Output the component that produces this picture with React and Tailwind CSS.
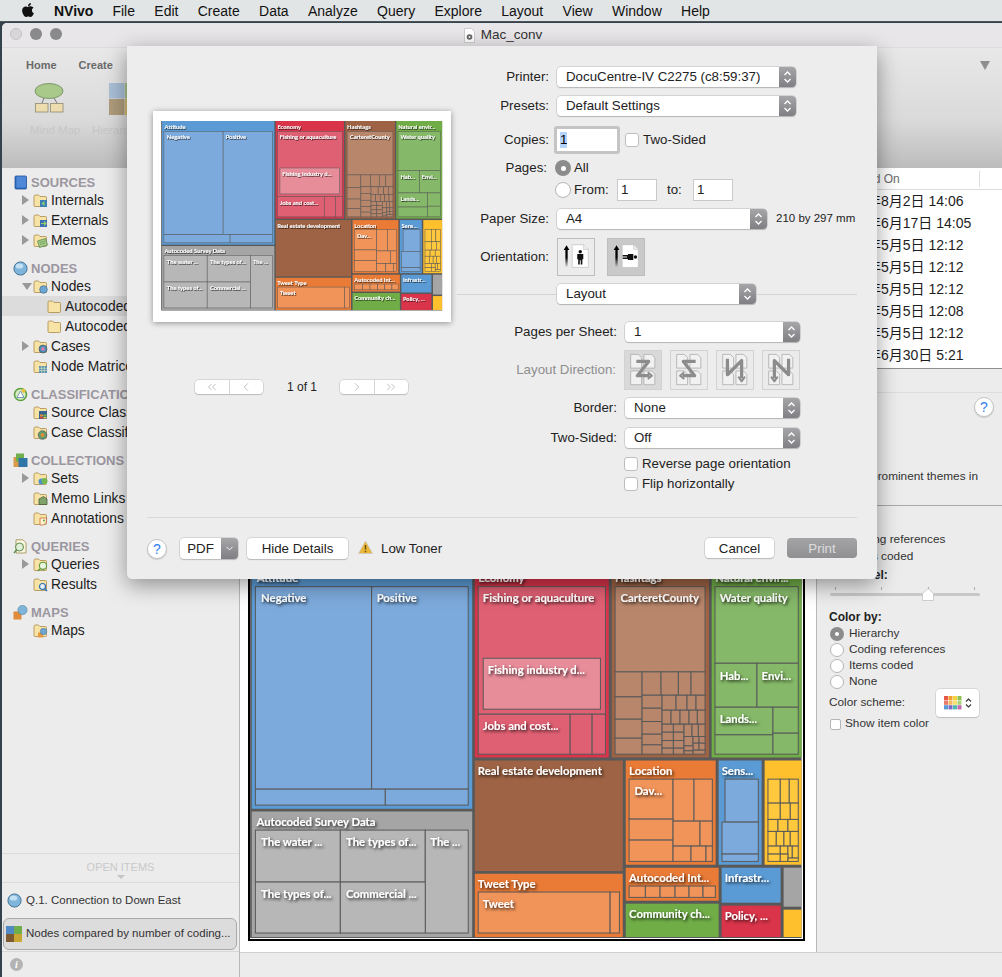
import React from 'react';
import { FaApple } from 'react-icons/fa';
import { ChevronLeft, ChevronRight, ChevronsLeft, ChevronsRight, ChevronDown } from 'lucide-react';

const BLUE = '#5b9bd5', BLUE2 = '#7caadc', RED = '#d9344a', RED2 = '#e06073', RED3 = '#e78c99';
const BROWN = '#9e6344', BROWN2 = '#b8866b', GREEN = '#70ad47', GREEN2 = '#85b868';
const GRAY = '#a5a5a5', GRAY2 = '#b7b7b7', ORANGE = '#ea7b36', ORANGE2 = '#f0945a', YELLOW = '#ffc02e', YELLOW2 = '#ffc83d';

// treemap rects, x1 y1 x2 y2 in 3x page units
const groups = [
  [-655, -12, 7, 717, BLUE], [-655, 725, 7, 1102, GRAY], [15, -12, 417, 563, RED], [426, -12, 718, 563, BROWN],
  [726, -12, 996, 563, GREEN], [15, 572, 459, 904, BROWN], [468, 572, 738, 885, ORANGE], [747, 572, 876, 885, BLUE],
  [885, 572, 996, 885, YELLOW], [15, 912, 459, 1102, ORANGE], [468, 894, 747, 993, ORANGE], [468, 1002, 747, 1102, GREEN],
  [756, 894, 933, 999, BLUE], [756, 1008, 933, 1102, RED], [942, 894, 996, 1011, GRAY], [942, 1020, 996, 1102, YELLOW],
];

const cells = (fill, list) => list.map((r) => [...r, fill]);

const leaves = [
  ...cells(BLUE2, [[-644, 50, -295, 658], [-295, 50, -5, 658], [-644, 658, -254, 706], [-254, 658, -5, 706]]),
  ...cells(GRAY2, [[-644, 781, -389, 937], [-389, 781, -134, 937], [-134, 781, -5, 1090], [-644, 937, -389, 1090], [-389, 937, -134, 1090]]),
  ...cells(RED2, [[25, 50, 407, 433], [25, 433, 301, 553], [301, 433, 367, 553], [367, 433, 407, 553]]),
  ...cells(RED3, [[40, 265, 392, 418]]),
  ...cells(BROWN2, [
    [436, 50, 706, 306], [436, 306, 517, 381], [436, 381, 517, 448], [436, 448, 517, 505], [436, 505, 517, 553],
    [517, 306, 574, 376], [574, 306, 626, 376], [626, 306, 664, 376], [664, 306, 706, 376],
    [517, 376, 577, 415], [517, 415, 577, 455], [517, 455, 577, 493], [517, 493, 577, 525], [517, 525, 577, 553],
    [577, 376, 619, 421], [619, 376, 652, 421], [652, 376, 679, 421], [679, 376, 706, 421],
    [577, 421, 604, 463], [604, 421, 631, 463], [631, 421, 658, 463], [658, 421, 683, 463], [683, 421, 706, 463],
    [577, 463, 611, 487], [611, 463, 643, 487], [577, 487, 611, 512], [611, 487, 643, 512],
    [577, 512, 611, 535], [611, 512, 643, 535], [577, 535, 611, 553], [611, 535, 643, 553],
    [643, 463, 667, 500], [667, 463, 686, 500], [686, 463, 706, 500], [643, 500, 670, 528], [670, 500, 688, 520], [688, 500, 706, 520],
    [670, 520, 688, 541], [688, 520, 706, 541], [643, 528, 670, 543], [643, 543, 670, 553], [670, 541, 706, 553],
  ]),
  ...cells(GREEN2, [
    [736, 50, 986, 280], [736, 280, 862, 412], [862, 280, 986, 412], [736, 412, 910, 495], [910, 412, 986, 490],
    [736, 495, 910, 553], [910, 490, 986, 553],
  ]),
  ...cells(ORANGE2, [
    [478, 628, 610, 748], [610, 628, 673, 754], [673, 628, 728, 754], [478, 748, 610, 811], [478, 811, 610, 875],
    [610, 754, 691, 829], [691, 754, 728, 829], [610, 829, 664, 875], [664, 829, 709, 875], [709, 829, 728, 875],
    [25, 967, 421, 1090], [421, 967, 449, 1090],
    [478, 949, 527, 983], [527, 949, 571, 983], [571, 949, 616, 983], [616, 949, 658, 983], [658, 949, 700, 983], [700, 949, 737, 983],
  ]),
  ...cells(BLUE2, [[766, 628, 866, 757], [757, 757, 866, 853], [757, 853, 866, 875]]),
  ...cells(YELLOW2, [
    [895, 628, 932, 700], [932, 628, 959, 700], [959, 628, 986, 700], [895, 700, 932, 749], [932, 700, 962, 749], [962, 700, 986, 749],
    [895, 749, 925, 785], [925, 749, 955, 785], [955, 749, 986, 785], [895, 785, 920, 829], [920, 785, 943, 829], [943, 785, 962, 829], [962, 785, 986, 829],
    [895, 829, 932, 853], [932, 829, 955, 853], [955, 829, 968, 865], [968, 829, 986, 865], [895, 853, 932, 875], [932, 853, 955, 875], [955, 865, 986, 875],
  ]),
];

const labels = [
  [-640, 25, 'Attitude'], [25, 25, 'Economy'], [436, 25, 'Hashtags'], [737, 25, 'Natural envir...'],
  [-627, 85, 'Negative'], [-280, 85, 'Positive'], [39, 85, 'Fishing or aquaculture'], [452, 85, 'CarteretCounty'], [750, 85, 'Water quality'],
  [54, 301, 'Fishing industry d...'], [39, 469, 'Jobs and cost...'], [750, 317, 'Hab...'], [876, 317, 'Envi...'], [750, 448, 'Lands...'],
  [-641, 757, 'Autocoded Survey Data'], [-627, 817, 'The water ...'], [-372, 817, 'The types of...'], [-119, 817, 'The ...'],
  [-627, 973, 'The types of...'], [-372, 973, 'Commercial ...'],
  [24, 604, 'Real estate development'], [478, 604, 'Location'], [494, 665, 'Dav...'], [756, 604, 'Sens...'],
  [24, 943, 'Tweet Type'], [39, 1003, 'Tweet'], [478, 925, 'Autocoded Int...'], [765, 925, 'Infrastr...'],
  [478, 1033, 'Community ch...'], [765, 1040, 'Policy, ...'],
];

const Treemap = ({ id }) => (
  <svg viewBox="-660 -12 1660 1120" className="block h-full w-full">
    <defs>
      <filter id={id} x="-20%" y="-60%" width="140%" height="240%">
        <feDropShadow dx="4" dy="5" stdDeviation="4" floodColor="#000" floodOpacity="0.85" />
      </filter>
    </defs>
    <rect x="-660" y="-12" width="1660" height="1120" fill="#fff" />
    <rect x="-660" y="-12" width="1656" height="1117" fill="#595959" />
    {groups.map(([x1, y1, x2, y2, fill], i) => (
      <rect key={i} x={x1} y={y1} width={x2 - x1} height={y2 - y1} fill={fill} />
    ))}
    {leaves.map(([x1, y1, x2, y2, fill], i) => (
      <rect key={i} x={x1} y={y1} width={x2 - x1} height={y2 - y1} fill={fill} stroke="#595959" strokeWidth="3" />
    ))}
    <g filter={`url(#${id})`} fill="#fff" fontFamily="Lato, sans-serif" fontWeight="700" fontSize="34">
      {labels.map(([x, y, text], i) => (
        <text key={i} x={x} y={y + 12}>{text}</text>
      ))}
    </g>
  </svg>
);

const Folder = ({ children }) => (
  <svg viewBox="0 0 15 15" className="h-[15px] w-[15px] shrink-0">
    <path d="M1 3.5 Q1 2 2.5 2 H5.5 L7 3.5 H12.5 Q13.5 3.5 13.5 4.5 V12.5 Q13.5 13.5 12.5 13.5 H2 Q1 13.5 1 12.5 Z" fill="#f7e3a6" stroke="#a98a4c" strokeWidth="0.8" />
    {children}
  </svg>
);

const badges = {
  internals: <><rect x="7" y="7" width="7" height="7" fill="#3d7fb5" /><path d="M8.5 10.5 L11.5 8 V13 Z" fill="#8fd06e" /></>,
  externals: <><rect x="7" y="7" width="7" height="7" fill="#3d6fb5" /><path d="M8 10.5 H13 M11 8.5 L13 10.5 L11 12.5" stroke="#8fd06e" strokeWidth="1.2" fill="none" /></>,
  memos: <><path d="M4.5 8 L12.5 5.5 L14.5 12 L6.5 14.5 Z" fill="#a9d08e" stroke="#4c7a3a" strokeWidth="0.7" /><path d="M6.5 9.5 L12 8 M7 11.5 L12.5 10" stroke="#4c7a3a" strokeWidth="0.6" /></>,
  nodes: <circle cx="10.5" cy="10.5" r="3.8" fill="#6ea6d3" stroke="#3d6b8e" strokeWidth="0.7" />,
  cases: <><circle cx="10" cy="10" r="4" fill="#4a8fb8" stroke="#555" strokeWidth="0.7" /><circle cx="10" cy="10" r="1.8" fill="#e27ab0" /></>,
  matrix: <><rect x="6" y="7" width="8" height="7" fill="#5a8fb0" /><path d="M8.6 7 V14 M11.3 7 V14 M6 9.3 H14 M6 11.6 H14" stroke="#dcecc2" strokeWidth="0.6" /></>,
  source: <><rect x="6" y="6" width="8" height="8" fill="#36648f" /><rect x="7" y="9.5" width="3" height="2" fill="#e48a3a" /><rect x="10.5" y="9.5" width="3" height="2" fill="#7ab648" /><rect x="7" y="12" width="3" height="1.6" fill="#d6453a" /><rect x="10.5" y="12" width="3" height="1.6" fill="#e8c33a" /></>,
  caseClass: <><circle cx="9.5" cy="10" r="4.3" fill="#5f9e6e" stroke="#555" strokeWidth="0.7" /><circle cx="9.5" cy="10" r="2" fill="#e08a3a" /></>,
  sets: <><circle cx="8.5" cy="10.5" r="3" fill="#4d8fd0" /><circle cx="11.5" cy="10" r="3" fill="#72b84e" /></>,
  memoLinks: <path d="M6 8 L10.5 5.5 L14 8 V13.5 H6 Z" fill="#7fa36a" stroke="#4a5a3a" strokeWidth="0.8" />,
  annotations: <><path d="M7 7 H13.5 V11 L10.5 14 H7 Z" fill="#fff3d0" stroke="#c8683a" strokeWidth="0.8" /><circle cx="11" cy="9.5" r="1" fill="#5aa04a" /></>,
  queries: <><circle cx="10" cy="8.8" r="3.6" fill="#eaf5e0" stroke="#5e9a3e" strokeWidth="1.1" /><path d="M7.4 11.5 L4.8 14" stroke="#5e9a3e" strokeWidth="1.4" /></>,
  results: <><circle cx="9.5" cy="9.5" r="3" fill="#e8f2fa" stroke="#2f6fb0" strokeWidth="1.2" /><path d="M11.8 11.8 L14 14" stroke="#2f6fb0" strokeWidth="1.4" /></>,
  maps: <><rect x="5" y="9.5" width="5" height="5" fill="#e89a3c" /><circle cx="10.5" cy="8.5" r="3.2" fill="#6ea6d3" stroke="#3d6b8e" strokeWidth="0.5" /></>,
};

const headIcons = {
  sources: (
    <svg viewBox="0 0 14 15" className="h-[15px] w-[14px]">
      <rect x="1" y="1" width="11.5" height="13" rx="1" fill="#2f6cc0" stroke="#1f4f96" strokeWidth="0.8" />
      <rect x="2.5" y="1.5" width="9.5" height="11" fill="#4f88d6" />
    </svg>
  ),
  nodes: (
    <svg viewBox="0 0 15 15" className="h-[15px] w-[15px]">
      <circle cx="7.5" cy="7.5" r="6.6" fill="#7fb5da" stroke="#3d6b8e" strokeWidth="0.9" />
      <ellipse cx="6.5" cy="5" rx="3.8" ry="2.6" fill="#c2e0f2" />
    </svg>
  ),
  classifications: (
    <svg viewBox="0 0 15 15" className="h-[15px] w-[15px]">
      <circle cx="7.5" cy="7.5" r="6" fill="#d8ecc4" stroke="#5da040" strokeWidth="1.6" />
      <path d="M7.5 4 L11 10.5 H4 Z" fill="#fff" stroke="#6a8fb8" strokeWidth="0.9" />
      <circle cx="10.5" cy="3.8" r="2" fill="#e9c23c" />
    </svg>
  ),
  collections: (
    <svg viewBox="0 0 15 15" className="h-[15px] w-[15px]">
      <rect x="0.5" y="4" width="7" height="10" fill="#d99a4a" />
      <rect x="3" y="0.5" width="8" height="8" fill="#6fae4a" />
      <rect x="5.5" y="5" width="9" height="9" fill="#2f75a8" />
    </svg>
  ),
  queries: (
    <svg viewBox="0 0 15 15" className="h-[15px] w-[15px]">
      <path d="M3 0.8 H10 L13 3.8 V14 H3 Z" fill="#fbf6df" stroke="#9a8a50" strokeWidth="0.8" />
      <circle cx="6.5" cy="8" r="4" fill="#e0efd8" stroke="#5e8a4e" strokeWidth="1" />
      <path d="M3.6 11 L1 14" stroke="#5e8a4e" strokeWidth="1.4" />
    </svg>
  ),
  maps: (
    <svg viewBox="0 0 15 15" className="h-[15px] w-[15px]">
      <rect x="0.5" y="6.5" width="8" height="8" fill="#e08a3a" />
      <circle cx="9.5" cy="5" r="4.6" fill="#7fb5da" stroke="#4f7f9e" strokeWidth="0.6" />
    </svg>
  ),
};

const tree = [
  { title: 'SOURCES', icon: 'sources', items: [['Internals', 'internals', 1], ['Externals', 'externals', 1], ['Memos', 'memos', 1]] },
  {
    title: 'NODES', icon: 'nodes',
    items: [['Nodes', 'nodes', 2], ['Autocoded Survey Data', null, 0, true, true], ['Autocoded Interviews', null, 0, true], ['Cases', 'cases', 1], ['Node Matrices', 'matrix', 0]],
  },
  { title: 'CLASSIFICATIONS', icon: 'classifications', items: [['Source Classifications', 'source', 0], ['Case Classifications', 'caseClass', 0]] },
  { title: 'COLLECTIONS', icon: 'collections', items: [['Sets', 'sets', 1], ['Memo Links', 'memoLinks', 0], ['Annotations', 'annotations', 0]] },
  { title: 'QUERIES', icon: 'queries', items: [['Queries', 'queries', 1], ['Results', 'results', 0]] },
  { title: 'MAPS', icon: 'maps', items: [['Maps', 'maps', 0]] },
];

const Sidebar = () => (
  <aside className="flex w-[238px] shrink-0 flex-col border-r border-[#b9b9b9] bg-[#ececec]">
    <div className="pt-[6px]">
      {tree.map((group) => (
        <div key={group.title} className="mb-[10px]">
          <div className="flex h-4 items-center">
            <span className="flex w-[29px] justify-end pr-[3px]">{headIcons[group.icon]}</span>
            <span className="pt-[2px] text-[13px] font-bold whitespace-nowrap text-[#9b96a0]">{group.title}</span>
          </div>
          {group.items.map(([name, badge, arrow, nested, selected]) => (
            <div key={name} className={`flex h-5 items-center pl-[20px] ${selected ? 'bg-[#dcdcdc]' : ''}`}>
              <span className="flex w-[11px] shrink-0">
                {arrow === 1 && <span className="h-0 w-0 border-y-[5px] border-l-[7px] border-y-transparent border-l-[#999]" />}
                {arrow === 2 && <span className="h-0 w-0 border-x-[5px] border-t-[7px] border-x-transparent border-t-[#999]" />}
              </span>
              <span className={nested ? 'ml-[14px]' : ''}><Folder>{badges[badge]}</Folder></span>
              <span className="ml-[3px] pt-[2px] text-[13.8px] whitespace-nowrap text-[#1d1d1d]">{name}</span>
            </div>
          ))}
        </div>
      ))}
    </div>
    <div className="mt-auto">
      <div className="flex h-[30px] flex-col items-center justify-center border-y border-[#dcdcdc] pt-[4px]">
        <span className="text-[11px] leading-3 text-[#c9c9c9]">OPEN ITEMS</span>
        <span className="mt-[2px] h-0 w-0 border-x-[4px] border-t-[4px] border-x-transparent border-t-[#c4c4c4]" />
      </div>
      <div className="flex h-[35px] items-center pl-[5px] text-[11.5px] text-[#333]">
        {headIcons.nodes}
        <span className="ml-[4px]">Q.1. Connection to Down East</span>
      </div>
      <div className="mr-[2px] ml-px flex h-[32px] items-center rounded-[6px] border border-[#a9a9a9] bg-[#dcdcdc] pl-[2px] text-[11.5px] text-[#333]">
        <svg viewBox="0 0 16 16" className="h-4 w-4 shrink-0">
          <rect width="8" height="8" fill="#4f89c6" /><rect x="8" width="8" height="8" fill="#6fae4a" />
          <rect y="8" width="8" height="8" fill="#7d5a30" /><rect x="8" y="8" width="8" height="8" fill="#c9a531" />
        </svg>
        <span className="ml-[4px] whitespace-nowrap">Nodes compared by number of coding...</span>
      </div>
      <div className="mt-[1px] flex h-[26px] items-center border-t border-[#d8d8d8] pl-[8px]">
        <span className="flex h-[13px] w-[13px] items-center justify-center rounded-full bg-[#b3b3b3] font-['Liberation_Serif',serif] text-[10px] font-bold text-white italic">i</span>
      </div>
    </div>
  </aside>
);

const Chevrons = () => (
  <svg viewBox="0 0 9 14" className="h-[14px] w-[9px]" fill="none" stroke="#fff" strokeWidth="1.3">
    <path d="M1.5 5 L4.5 2 L7.5 5 M1.5 9 L4.5 12 L7.5 9" />
  </svg>
);

const Select = ({ value, className }) => (
  <div className={`flex h-5 items-center justify-between rounded-[4px] bg-white shadow-[0_0_0_0.5px_#b9b9b9,0_1px_1px_#b4b4b4] ${className}`}>
    <span className="pl-[9px] whitespace-nowrap text-[#222]">{value}</span>
    <span className="flex h-full w-[17px] items-center justify-center rounded-r-[4px] bg-gradient-to-b from-[#a6a6a9] to-[#808084]"><Chevrons /></span>
  </div>
);

const Check = () => <span className="block h-[14px] w-[14px] shrink-0 rounded-[3px] border border-[#bdbdbd] bg-white" />;

const Radio = ({ on }) => (
  on
    ? <span className="flex h-4 w-4 shrink-0 items-center justify-center rounded-full bg-[#8c8c8c]"><span className="h-[5px] w-[5px] rounded-full bg-white" /></span>
    : <span className="h-4 w-4 shrink-0 rounded-full border border-[#b5b5b5] bg-white" />
);

const Label = ({ children, className }) => (
  <span className={`shrink-0 pr-2 text-right whitespace-nowrap text-[#222] ${className}`}>{children}</span>
);

const Field = ({ value, className }) => (
  <span className={`flex h-[22px] items-center border border-[#c9c9c9] bg-white pl-[3px] text-[#222] ${className}`}>{value}</span>
);

const Orient = ({ landscape, active }) => (
  <div className={`h-[38px] w-[38px] border border-[#bdbdbd] ${active ? 'bg-[#c9c9c9]' : 'bg-[#ececec]'}`}>
    <svg viewBox="0 0 38 38" className="h-full w-full">
      <defs>
        <linearGradient id={active ? 'fadeA' : 'fadeB'} x1="0" y1="0" x2="0" y2="1">
          <stop offset="0" stopColor="#000" /><stop offset="0.45" stopColor="#000" /><stop offset="1" stopColor="#000" stopOpacity="0" />
        </linearGradient>
      </defs>
      <rect x="7.8" y="11" width="2.4" height="19" fill={`url(#${active ? 'fadeA' : 'fadeB'})`} />
      <path d="M6 11.5 L9 6.5 L12 11.5 Z" fill="#000" />
      <path d="M15 6 H27 L32 11 V30 H15 Z" fill="#fff" stroke="#bdbdbd" strokeWidth="0.7" />
      <path d="M27 6 V11 H32" fill="#eee" stroke="#bdbdbd" strokeWidth="0.6" />
      <g fill="#111" transform={landscape ? 'rotate(90 23.5 19)' : undefined}>
        <circle cx="23.5" cy="13.5" r="1.8" />
        <path d="M20.3 15.8 H26.7 V21.5 H25.7 V27 H24 V22.5 H23 V27 H21.3 V21.5 H20.3 Z" />
      </g>
    </svg>
  </div>
);

const dirPaths = [
  ['M12 11 H25 L13 26 H26', 'M24 22.5 L28.5 26 L24 29.5'],
  ['M26 11 H13 L25 26 H12', 'M14 22.5 L9.5 26 L14 29.5'],
  ['M11 8 V25 L26 10 V29', 'M22.5 27 L26 32 L29.5 27'],
  ['M27 8 V25 L12 10 V29', 'M8.5 27 L12 32 L15.5 27'],
];

const DirButton = ({ index }) => (
  <div className={`h-10 w-[38px] border border-[#d2d2d2] ${index === 0 ? 'bg-[#d9d9d9]' : 'bg-[#ebebeb]'}`}>
    <svg viewBox="0 0 38 40" className="h-full w-full" fill="none">
      <g stroke="#a8a8a8" strokeWidth="0.8" fill="#f1f1f1">
        <path d="M6 3.5 H14 L17.5 7 V18 H6 Z" /><path d="M20 3.5 H28 L31.5 7 V18 H20 Z" />
        <path d="M6 21 H14 L17.5 24.5 V35.5 H6 Z" /><path d="M20 21 H28 L31.5 24.5 V35.5 H20 Z" />
      </g>
      <g stroke="#8c8c8c" strokeWidth="3.4" strokeLinejoin="round">
        <path d={dirPaths[index][0]} /><path d={dirPaths[index][1]} strokeWidth="2" />
      </g>
    </svg>
  </div>
);

const HelpButton = ({ className }) => (
  <span className={`flex h-5 w-5 items-center justify-center rounded-full border border-[#c4c4c4] bg-white text-sm text-[#2f80ed] shadow-[0_1px_1px_#c9c9c9] ${className}`}>?</span>
);

const PageButtons = ({ left }) => {
  const A = left ? ChevronsLeft : ChevronRight;
  const B = left ? ChevronLeft : ChevronsRight;
  return (
    <div className="flex h-[14px] w-[68px] rounded-[4px] bg-white shadow-[0_0_0_0.5px_#c0c0c0,0_1px_1px_#bdbdbd]">
      <span className="flex flex-1 items-center justify-center border-r border-[#d5d5d5]"><A size={14} strokeWidth={1.2} color="#a8a8a8" /></span>
      <span className="flex flex-1 items-center justify-center"><B size={14} strokeWidth={1.2} color="#a8a8a8" /></span>
    </div>
  );
};

const Button = ({ children, className }) => (
  <span className={`flex h-5 items-center justify-center rounded-[4px] bg-white text-[#222] shadow-[0_0_0_0.5px_#bdbdbd,0_1px_1px_#b8b8b8] ${className}`}>{children}</span>
);

const PrintSheet = () => (
  <div className="absolute top-[46px] left-[127px] z-10 flex h-[533px] w-[750px] flex-col rounded-b-[5px] bg-[#ededed] text-[13.3px] shadow-[0_6px_22px_rgba(0,0,0,0.4)]">
    <div className="flex h-[471px]">
      <div className="w-[330px] shrink-0 pt-[65px] pl-[26px]">
        <div className="h-[211px] w-[298px] bg-white px-[8px] pt-[10px] shadow-[0_1px_6px_rgba(0,0,0,0.4)]">
          <div className="h-[190px] w-[282px] blur-[0.5px]"><Treemap id="previewShadow" /></div>
        </div>
        <div className="mt-[57px] ml-[42px] flex items-center">
          <PageButtons left />
          <span className="w-[77px] pl-px text-center text-xs text-[#222]">1 of 1</span>
          <PageButtons />
        </div>
      </div>
      <div className="w-[400px] pt-[21px]">
        <div className="flex items-center"><Label className="w-[100px]">Printer:</Label><Select className="w-[239px]" value="DocuCentre-IV C2275 (c8:59:37)" /></div>
        <div className="mt-[9px] flex items-center"><Label className="w-[100px]">Presets:</Label><Select className="w-[239px]" value="Default Settings" /></div>
        <div className="mt-[10px] flex h-[28px] items-center">
          <Label className="w-[100px]">Copies:</Label>
          <span className="-ml-[3px] flex h-[28px] w-[66px] items-center rounded-[3px] bg-[#c4c4c6] p-[3px]">
            <span className="flex h-full w-full items-center bg-white pl-[3px]"><span className="bg-[#b3d4fc] leading-4">1</span></span>
          </span>
          <span className="ml-[5px]"><Check /></span>
          <span className="ml-[4px] text-[#222]">Two-Sided</span>
        </div>
        <div className="mt-[6px] flex h-4 items-center"><Label className="w-[98px]">Pages:</Label><Radio on /><span className="ml-[3px] text-[#222]">All</span></div>
        <div className="mt-[3px] flex h-[22px] items-center pl-[98px]">
          <Radio />
          <span className="ml-[3px] w-[43px] text-[#222]">From:</span>
          <Field className="w-10" value="1" />
          <span className="w-9 pl-[10px] text-[#222]">to:</span>
          <Field className="w-10" value="1" />
        </div>
        <div className="mt-[8px] flex items-center">
          <Label className="w-[100px]">Paper Size:</Label>
          <Select className="w-[210px]" value="A4" />
          <span className="ml-[9px] text-[11.5px] whitespace-nowrap text-[#222]">210 by 297 mm</span>
        </div>
        <div className="mt-[9px] flex items-center">
          <Label className="w-[100px]">Orientation:</Label>
          <Orient />
          <span className="ml-[12px]"><Orient landscape active /></span>
        </div>
        <div className="mt-[8px] flex items-center">
          <span className="h-px w-[100px] bg-[#d4d4d4]" />
          <Select className="w-[199px]" value="Layout" />
          <span className="h-px flex-1 bg-[#d4d4d4]" />
        </div>
        <div className="mt-[18px] flex items-center"><Label className="w-[168px]">Pages per Sheet:</Label><Select className="w-[175px]" value="1" /></div>
        <div className="mt-[8px] flex items-center">
          <Label className="w-[167px] !text-[#8e8e8e]">Layout Direction:</Label>
          <DirButton index={0} />
          <span className="ml-[8px]"><DirButton index={1} /></span>
          <span className="ml-[8px]"><DirButton index={2} /></span>
          <span className="ml-[8px]"><DirButton index={3} /></span>
        </div>
        <div className="mt-[8px] flex items-center"><Label className="w-[168px]">Border:</Label><Select className="w-[175px]" value="None" /></div>
        <div className="mt-[10px] flex items-center"><Label className="w-[168px]">Two-Sided:</Label><Select className="w-[175px]" value="Off" /></div>
        <div className="mt-[9px] flex h-[14px] items-center pl-[167px]"><Check /><span className="ml-[4px] text-[#222]">Reverse page orientation</span></div>
        <div className="mt-[6px] flex h-[14px] items-center pl-[167px]"><Check /><span className="ml-[4px] text-[#222]">Flip horizontally</span></div>
      </div>
    </div>
    <div className="mx-[20px] flex flex-1 items-start border-t border-[#d9d9d9] pt-[20px]">
      <HelpButton className="mt-px" />
      <div className="ml-[13px] flex h-[21px] w-[58px] rounded-[4px] bg-white shadow-[0_0_0_0.5px_#bdbdbd,0_1px_1px_#b8b8b8]">
        <span className="flex w-[41px] items-center justify-center text-[#222]">PDF</span>
        <span className="flex flex-1 items-center justify-center rounded-r-[4px] bg-gradient-to-b from-[#a6a6a9] to-[#808084]"><ChevronDown size={11} color="#fff" strokeWidth={2} /></span>
      </div>
      <Button className="ml-[9px] !h-[21px] w-[101px]">Hide Details</Button>
      <svg viewBox="0 0 15 14" className="mt-[2px] ml-[10px] h-[14px] w-[15px]">
        <path d="M7.5 1 L14.5 13.5 H0.5 Z" fill="#e9b73a" stroke="#c9c9c9" strokeWidth="0.7" />
        <path d="M7.5 5 V9.5 M7.5 10.8 V12.2" stroke="#6a4a10" strokeWidth="1.4" />
      </svg>
      <span className="ml-[8px] leading-[21px] text-[#222]">Low Toner</span>
      <Button className="ml-auto w-[69px] pt-px">Cancel</Button>
      <span className="ml-[13px] flex h-5 w-[70px] items-center justify-center rounded-[4px] bg-gradient-to-b from-[#a4a4a6] to-[#909093] pt-px text-[#dcdcdc]">Print</span>
    </div>
  </div>
);

const dates = ['年8月2日 14:06', '年6月17日 14:05', '年5月5日 12:12', '年5月5日 12:12', '年5月5日 12:12', '年5月5日 12:08', '年5月5日 12:12', '年6月30日 5:21'];

const Table = () => (
  <div className="h-[201px] shrink-0 border-b border-[#8f8f8f] bg-white">
    <div className="flex h-[22px] items-center border-b border-[#dcdcdc] pl-[595px] text-xs text-[#6b6b6b]">
      <span className="w-[144px]">Modified On</span>
      <span className="h-[16px] w-px bg-[#dcdcdc]" />
    </div>
    {dates.map((date, i) => (
      <div key={i} className="flex h-[22px] items-center pl-[627px] text-sm whitespace-nowrap text-[#1d1d1d]">{date}</div>
    ))}
  </div>
);

const SmallRadio = ({ on }) => (
  on
    ? <span className="flex h-[14px] w-[14px] items-center justify-center rounded-full bg-[#8c8c8c]"><span className="h-1 w-1 rounded-full bg-white" /></span>
    : <span className="h-[14px] w-[14px] rounded-full border border-[#b5b5b5] bg-white" />
);

const RadioRow = ({ on, children, className }) => (
  <div className={`ml-px flex h-4 items-center ${className}`}>
    <SmallRadio on={on} /><span className="ml-[5px] text-[11.8px] text-[#333]">{children}</span>
  </div>
);

const OptionsPanel = () => (
  <div className="flex w-[186px] shrink-0 flex-col border-l border-[#b9b9b9] bg-[#ececec]">
    <div className="h-6 border-b border-[#dcdcdc]" />
    <div className="relative h-[113px] border-b border-[#a9a9a9] pt-[75px] pr-[24px] text-right text-[11.8px] whitespace-nowrap text-[#333]">
      <HelpButton className="absolute top-[4px] right-[8px]" />
      prominent themes in
    </div>
    <div className="pt-[8px] pl-[12px]">
      <div className="h-4 text-xs leading-4 font-bold text-[#222]">Size by:</div>
      <RadioRow className="mt-[2px]">Coding references</RadioRow>
      <RadioRow className="mt-px">Items coded</RadioRow>
      <div className="mt-[2px] h-4 text-xs leading-4 font-bold text-[#222]">Tree level:</div>
      <div className="mt-[4px] ml-px h-[18px] w-[150px]">
        <div className="flex justify-between px-[5px]">
          {[0, 1, 2, 3].map((t) => <span key={t} className="h-[3px] w-px bg-[#aaa]" />)}
        </div>
        <div className="relative mt-[3px] h-[3px] rounded-full bg-[#c8c8c8]">
          <svg viewBox="0 0 12 13" className="absolute -top-[5px] left-[92px] h-[13px] w-[12px]">
            <path d="M6 0.5 L11.5 5.5 V12.5 H0.5 V5.5 Z" fill="#fff" stroke="#bdbdbd" strokeWidth="0.7" />
          </svg>
        </div>
      </div>
      <div className="mt-[4px] h-4 text-xs leading-4 font-bold text-[#222]">Color by:</div>
      <RadioRow on className="mt-px">Hierarchy</RadioRow>
      <RadioRow>Coding references</RadioRow>
      <RadioRow>Items coded</RadioRow>
      <RadioRow>None</RadioRow>
      <div className="-mt-px flex h-[28px] items-center text-[11.8px] text-[#333]">
        Color scheme:
        <span className="mr-[23px] ml-auto flex h-[28px] w-[43px] items-center justify-center gap-[3px] rounded-[4px] bg-white shadow-[0_0_0_0.5px_#c4c4c4,0_1px_1px_#bdbdbd]">
          <svg viewBox="0 0 18 14" className="h-[14px] w-[18px]">
            {[['#e8574a', '#f0a030', '#f6d33c', '#8cc152'], ['#e97a6c', '#f5b860', '#f8e070', '#a8d478'], ['#5b9bd5', '#7e6bc4', '#4fb8b0', '#c46bb0']].map((row, y) =>
              row.map((c, x) => <rect key={`${x}${y}`} x={x * 4.5} y={y * 4.6} width="4" height="4.2" fill={c} />)
            )}
          </svg>
          <svg viewBox="0 0 7 12" className="h-3 w-[7px]" fill="none" stroke="#333" strokeWidth="1.1"><path d="M1 4.5 L3.5 2 L6 4.5 M1 7.5 L3.5 10 L6 7.5" /></svg>
        </span>
      </div>
      <div className="flex h-[14px] items-center text-[11.8px] text-[#333]">
        <span className="ml-px h-[11px] w-[11px] rounded-[2px] border border-[#b5b5b5] bg-white" />
        <span className="ml-[4px]">Show item color</span>
      </div>
    </div>
  </div>
);

const menus = ['File', 'Edit', 'Create', 'Data', 'Analyze', 'Query', 'Explore', 'Layout', 'View', 'Window', 'Help'];

export default function App() {
  return (
    <div className="relative h-[977px] w-[1002px] overflow-hidden bg-[#33424c] font-['Liberation_Sans','Noto_Sans_CJK_JP',sans-serif]">
      <div className="flex h-[22px] items-center border-b border-[#4c5459] bg-[#e2e5e6] pl-[20px] text-sm text-[#111]">
        <FaApple size={16} className="mb-[2px]" />
        <span className="ml-[18px] font-bold">NVivo</span>
        <div className="ml-[19px] flex gap-[19.3px]">
          {menus.map((m) => <span key={m}>{m}</span>)}
        </div>
      </div>
      <div className="mt-px ml-[2px] flex h-[954px] flex-col overflow-hidden rounded-tl-[5px] bg-[#ececec]">
        <div className="relative flex h-[25px] shrink-0 items-center justify-center border-b border-[#dcdcdc] bg-[#e8e6e8] pl-[2px] text-[13.5px] text-[#333]">
          <span className="absolute top-[5px] left-[8px] flex gap-[8px]">
            <span className="h-3 w-3 rounded-full border border-[#c4c4c4] bg-[#d8d6d8]" />
            <span className="h-3 w-3 rounded-full bg-[#8a898b]" />
            <span className="h-3 w-3 rounded-full bg-[#8a898b]" />
          </span>
          <svg viewBox="0 0 11 15" className="mr-[6px] h-[15px] w-[11px]">
            <path d="M0.5 0.5 H7.5 L10.5 3.5 V14.5 H0.5 Z" fill="#fff" stroke="#bbb" strokeWidth="0.7" />
            <circle cx="5.5" cy="9" r="2.8" fill="#666" /><circle cx="5.5" cy="9" r="1" fill="#eee" />
          </svg>
          Mac_conv
        </div>
        <div className="relative h-[120px] shrink-0 bg-gradient-to-b from-[#e8e8e8] via-[#dadada] via-60% to-[#bcbcbc] pt-[10px] pl-[24px]">
          <div className="flex gap-[22px] text-[11px] leading-[14px] font-bold text-[#6a6a6a]">
            <span>Home</span><span>Create</span>
          </div>
          <div className="mt-[11px] flex">
            <div className="flex w-[66px] flex-col items-start pl-[4px]">
              <svg viewBox="0 0 30 30" className="ml-[4px] h-[30px] w-[30px]">
                <path d="M10 15 L8 20 M20 15 L23 20" stroke="#777" strokeWidth="1" />
                <ellipse cx="15" cy="8" rx="14" ry="7.5" fill="#a9c98a" stroke="#6f8a5a" strokeWidth="0.8" />
                <rect x="1.5" y="20.5" width="12.5" height="8.5" fill="#ecdcae" stroke="#8f8a70" strokeWidth="0.8" />
                <rect x="16.5" y="20.5" width="12.5" height="8.5" fill="#ecdcae" stroke="#8f8a70" strokeWidth="0.8" />
              </svg>
              <span className="mt-[9px] text-[11.5px] whitespace-nowrap text-[#c6c6c6]">Mind Map</span>
            </div>
            <div className="flex flex-col items-start">
              <svg viewBox="0 0 32 32" className="ml-[17px] h-8 w-8">
                <rect width="15.5" height="15.5" fill="#a8bfd6" /><rect x="16" width="16" height="15.5" fill="#a8c48a" />
                <rect y="16" width="15.5" height="16" fill="#b09c7c" /><rect x="16" y="16" width="16" height="16" fill="#d6bf70" />
              </svg>
              <span className="mt-[7px] text-[11.5px] whitespace-nowrap text-[#c6c6c6]">Hierarchy</span>
            </div>
          </div>
          <span className="absolute top-[13px] right-[12px] h-0 w-0 border-x-[5px] border-t-[9px] border-x-transparent border-t-[#8e8e8e]" />
        </div>
        <div className="flex min-h-0 flex-1">
          <Sidebar />
          <div className="flex min-w-0 flex-1 flex-col">
            <Table />
            <div className="flex min-h-0 flex-1">
              <div className="flex flex-1 flex-col justify-end bg-white pb-[11px] pl-[8px]">
                <div className="h-[377px] w-[557px] shrink-0 border-2 border-black">
                  <Treemap id="mainShadow" />
                </div>
              </div>
              <OptionsPanel />
            </div>
            <div className="h-[25px] shrink-0 border-t border-[#d0d0d0] bg-[#ececec]" />
          </div>
        </div>
      </div>
      <PrintSheet />
    </div>
  );
}
